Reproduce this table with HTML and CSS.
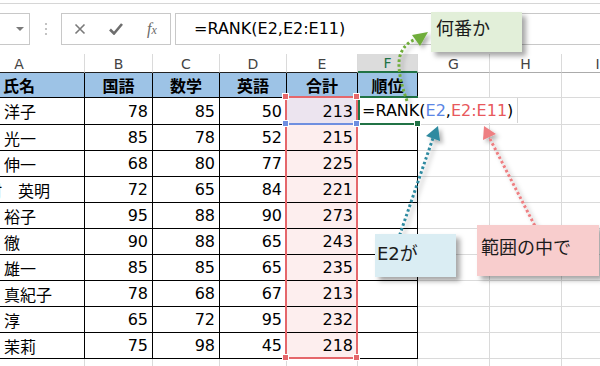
FILE: index.html
```html
<!DOCTYPE html>
<html lang="ja">
<head>
<meta charset="utf-8">
<link rel="stylesheet" href="styles.css">
</head>
<body>
<div class="app">
  <div class="fbar">
    <div class="namebox"><span class="caret"></span></div>
    <div class="grip">
      <svg width="4" height="14" viewBox="0 0 4 14"><circle cx="2" cy="2" r="1.1" fill="#b5b5b5"/><circle cx="2" cy="7" r="1.1" fill="#b5b5b5"/><circle cx="2" cy="12" r="1.1" fill="#b5b5b5"/></svg>
    </div>
    <div class="fbtns">
      <span class="fb"><svg width="12" height="12" viewBox="0 0 12 12"><path d="M1.5 1.5 L10.5 10.5 M10.5 1.5 L1.5 10.5" stroke="#7a7a7a" stroke-width="1.6" fill="none"/></svg></span>
      <span class="fb"><svg width="14" height="12" viewBox="0 0 14 12"><path d="M1 6.5 L5 10.5 L13 1" stroke="#6e6e6e" stroke-width="2.6" fill="none"/></svg></span>
      <span class="fb fx"><i>f<small>x</small></i></span>
    </div>
    <div class="finput">=RANK(E2,E2:E11)</div>
  </div>

  <div class="sheet">
    <div class="c ch dk">A</div><div class="c ch dk">B</div><div class="c ch dk">C</div><div class="c ch dk">D</div><div class="c ch dk">E</div><div class="c ch sel">F</div><div class="c ch">G</div><div class="c ch">H</div><div class="c ch">I</div>

    <div class="c t hd">氏名</div><div class="c t hd">国語</div><div class="c t hd">数学</div><div class="c t hd">英語</div><div class="c t hd">合計</div><div class="c t hd">順位</div><div class="c"></div><div class="c"></div><div class="c"></div>

    <div class="c t nm">洋子</div><div class="c t num">78</div><div class="c t num">85</div><div class="c t num">50</div><div class="c t num e2">213</div><div class="c t"></div><div class="c"></div><div class="c"></div><div class="c"></div>
    <div class="c t nm">光一</div><div class="c t num">85</div><div class="c t num">78</div><div class="c t num">52</div><div class="c t num ep">215</div><div class="c t"></div><div class="c"></div><div class="c"></div><div class="c"></div>
    <div class="c t nm">伸一</div><div class="c t num">68</div><div class="c t num">80</div><div class="c t num">77</div><div class="c t num ep">225</div><div class="c t"></div><div class="c"></div><div class="c"></div><div class="c"></div>
    <div class="c t nm wide">村　英明</div><div class="c t num">72</div><div class="c t num">65</div><div class="c t num">84</div><div class="c t num ep">221</div><div class="c t"></div><div class="c"></div><div class="c"></div><div class="c"></div>
    <div class="c t nm">裕子</div><div class="c t num">95</div><div class="c t num">88</div><div class="c t num">90</div><div class="c t num ep">273</div><div class="c t"></div><div class="c"></div><div class="c"></div><div class="c"></div>
    <div class="c t nm">徹</div><div class="c t num">90</div><div class="c t num">88</div><div class="c t num">65</div><div class="c t num ep">243</div><div class="c t"></div><div class="c"></div><div class="c"></div><div class="c"></div>
    <div class="c t nm">雄一</div><div class="c t num">85</div><div class="c t num">85</div><div class="c t num">65</div><div class="c t num ep">235</div><div class="c t"></div><div class="c"></div><div class="c"></div><div class="c"></div>
    <div class="c t nm">真紀子</div><div class="c t num">78</div><div class="c t num">68</div><div class="c t num">67</div><div class="c t num ep">213</div><div class="c t"></div><div class="c"></div><div class="c"></div><div class="c"></div>
    <div class="c t nm">淳</div><div class="c t num">65</div><div class="c t num">72</div><div class="c t num">95</div><div class="c t num ep">232</div><div class="c t"></div><div class="c"></div><div class="c"></div><div class="c"></div>
    <div class="c t nm">茉莉</div><div class="c t num">75</div><div class="c t num">98</div><div class="c t num">45</div><div class="c t num ep">218</div><div class="c t"></div><div class="c"></div><div class="c"></div><div class="c"></div>

    <div class="c"></div><div class="c"></div><div class="c"></div><div class="c"></div><div class="c"></div><div class="c"></div><div class="c"></div><div class="c"></div><div class="c"></div>
  </div>

  <div class="selbox"></div>
  <div class="e2line"></div>
  <div class="active"></div>
  <div class="edit">=RANK(<span class="rb">E2</span>,<span class="rr">E2:E11</span>)</div>
  <span class="sq red s1"></span><span class="sq red s2"></span><span class="sq red s3"></span><span class="sq red s4"></span>
  <span class="sq blue s5"></span><span class="sq blue s6"></span><span class="sq green s7"></span>

  <svg class="arrows" width="600" height="366" viewBox="0 0 600 366">
    <defs>
      <filter id="sh" x="-50%" y="-50%" width="200%" height="200%">
        <feDropShadow dx="3" dy="3" stdDeviation="2" flood-color="#000" flood-opacity="0.3"/>
      </filter>
    </defs>
    <g filter="url(#sh)">
      <path d="M407 101 C401 84 396 64 401 53 C404 46 409 42 414 40" fill="none" stroke="#70ad3a" stroke-width="3" stroke-dasharray="2.6 2.4"/>
      <polygon points="428,32 412,35 420,46" fill="#70ad3a"/>
    </g>
    <g filter="url(#sh)">
      <path d="M398 240 L433 138" fill="none" stroke="#2f8aa0" stroke-width="3" stroke-dasharray="2.6 2.4"/>
      <polygon points="438,126 426,136 440,141" fill="#2f8aa0"/>
    </g>
    <g filter="url(#sh)">
      <path d="M537 230 L489 137" fill="none" stroke="#ee7f82" stroke-width="3" stroke-dasharray="2.6 2.4"/>
      <polygon points="484,126 483,140 496,134" fill="#ee7f82"/>
    </g>
  </svg>

  <div class="note n1">何番か</div>
  <div class="note n2">E2が</div>
  <div class="note n3">範囲の中で</div>
</div>
</body>
</html>
```

FILE: styles.css
```css
* { box-sizing: border-box; margin: 0; padding: 0; }
html, body { width: 600px; height: 366px; overflow: hidden; background: #fff; }
body { font-family: "DejaVu Sans", "Noto Sans CJK JP", sans-serif; color: #000; }

.app { position: relative; width: 600px; height: 366px; overflow: hidden; padding-top: 3px; }

/* formula bar */
.fbar { display: flex; align-items: flex-start; height: 51px; border-top: 1px solid #d6d6d6; padding-top: 9px; }
.namebox { margin-left: -31px; width: 61px; height: 32px; border: 1px solid #c8c8c8; display: flex; align-items: center; justify-content: flex-end; padding-right: 5px; flex: none; }
.caret { width: 0; height: 0; border-left: 4px solid transparent; border-right: 4px solid transparent; border-top: 4px solid #7a7a7a; }
.grip { width: 31px; height: 32px; display: flex; align-items: center; justify-content: center; flex: none; }
.fbtns { width: 110px; height: 32px; border: 1px solid #c8c8c8; display: flex; align-items: center; flex: none; }
.fb { width: 36px; height: 30px; display: flex; align-items: center; justify-content: center; }
.fx i { font-family: "Liberation Serif", serif; font-size: 16px; color: #6a6a6a; font-style: italic; }
.fx small { font-size: 12px; }
.finput { margin-left: 4px; margin-right: -20px; flex: 1; height: 32px; border: 1px solid #c8c8c8; padding-left: 18px; font-size: 16px; line-height: 29px; white-space: nowrap; }

/* sheet */
.sheet { display: grid; grid-template-columns: 131px 68px 67px 67px 71px 60px 72px 72px 72px; grid-template-rows: 19px 25px 27px repeat(10, 26px) 26px; margin-left: -46px; width: 680px; }
.c { border-right: 1px solid #dadada; border-bottom: 1px solid #dadada; font-size: 16px; display: flex; align-items: center; white-space: nowrap; overflow: hidden; }
.ch { font-size: 14px; color: #444; justify-content: center; border-bottom-color: #ababab; padding-top: 1px; }
.ch.dk { border-bottom-color: #222; }
.ch.sel { background: #dcdcdc; color: #217346; border-bottom: 2px solid #217346; }
.t { border-right-color: #000; border-bottom-color: #000; }
.hd { background: #9dc3e6; font-weight: bold; justify-content: center; }
.nm { padding-left: 50px; }
.nm.wide { padding-left: 32px; }
.num { justify-content: flex-end; padding-right: 4px; }
.e2 { background: #ece4ef; }
.ep { background: #fdeeee; }

/* selection overlays */
.selbox { position: absolute; left: 285px; top: 96px; width: 73px; height: 263px; border: 2px solid #e5676b; }
.e2line { position: absolute; left: 286px; top: 123px; width: 71px; height: 2px; background: #6f8fe0; }
.active { position: absolute; left: 358px; top: 96px; width: 60px; height: 29px; border-top: 2px solid #217346; border-left: 2px solid #217346; border-bottom: 2px solid #217346; }
.edit { position: absolute; left: 360px; top: 98px; width: 158px; height: 25px; background: #fff; border-right: 1px solid #d4d4d4; padding-left: 2px; font-size: 16px; line-height: 25px; white-space: nowrap; }
.rb { color: #5b86e5; }
.rr { color: #e8585c; }
.sq { position: absolute; width: 5px; height: 5px; box-shadow: 0 0 0 1px #fff; }
.red { background: #e5676b; }
.blue { background: #6f8fe0; }
.green { background: #217346; }
.s1 { left: 283px; top: 94px; }
.s2 { left: 354px; top: 94px; }
.s3 { left: 283px; top: 355px; }
.s4 { left: 354px; top: 355px; }
.s5 { left: 283px; top: 121px; }
.s6 { left: 354px; top: 121px; }
.s7 { left: 415px; top: 121px; }

.arrows { position: absolute; left: 0; top: 0; pointer-events: none; }

/* callouts */
.note { position: absolute; font-size: 18px; line-height: 24px; color: #1b1b1b; white-space: nowrap; box-shadow: 4px 4px 5px rgba(0, 0, 0, 0.35); }
.n1 { left: 431px; top: 12px; width: 91px; height: 40px; background: #e2efd9; padding: 5px 0 0 5px; }
.n2 { left: 375px; top: 234px; width: 81px; height: 43px; background: #daedf3; padding: 8px 0 0 2px; }
.n3 { left: 477px; top: 225px; width: 122px; height: 51px; background: #f8cdcd; padding: 11px 0 0 4px; }
```
